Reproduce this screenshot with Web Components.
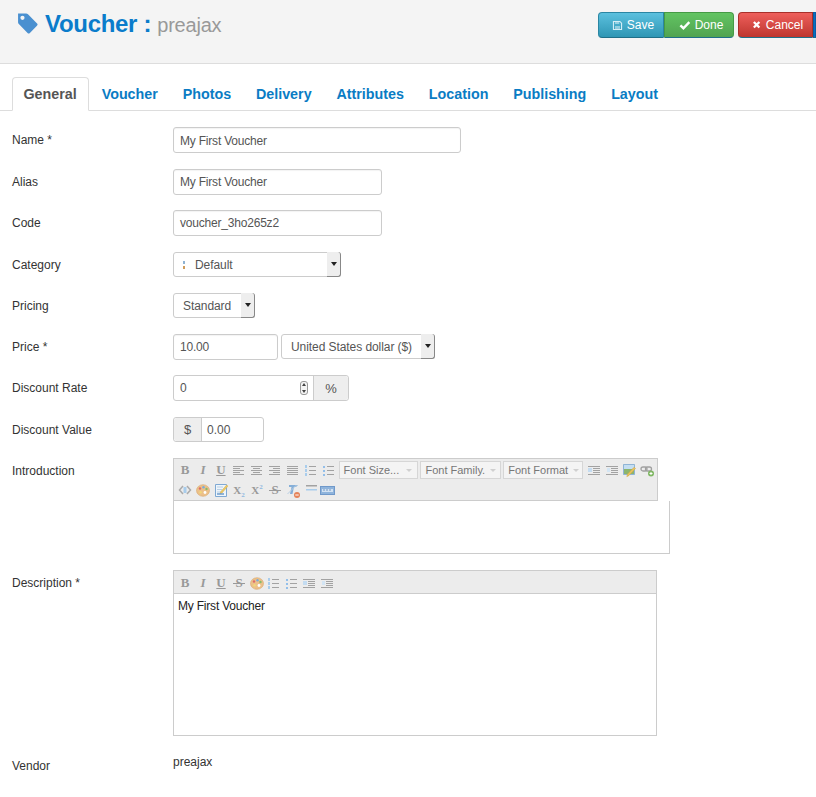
<!DOCTYPE html>
<html>
<head>
<meta charset="utf-8">
<title>Voucher</title>
<style>
  html, body { margin: 0; padding: 0; background: #fff; }
  body { font: 12px "Liberation Sans", Arial, sans-serif; color: #333; overflow: hidden; height: 797px; }
</style>
</head>
<body>
<page-header>
  <tool-button slot="actions" kind="save" icon="save">Save</tool-button>
  <tool-button slot="actions" kind="done" icon="check">Done</tool-button>
  <tool-button slot="actions" kind="cancel" icon="times">Cancel</tool-button>
  <tool-button slot="actions" kind="more"></tool-button>
</page-header>
<tab-bar>
  <tab-item active>General</tab-item>
  <tab-item>Voucher</tab-item>
  <tab-item>Photos</tab-item>
  <tab-item>Delivery</tab-item>
  <tab-item>Attributes</tab-item>
  <tab-item>Location</tab-item>
  <tab-item>Publishing</tab-item>
  <tab-item>Layout</tab-item>
</tab-bar>
<form-body>
  <form-row label="Name *" height="42"><text-box width="288" style="line-height:26px">My First Voucher</text-box></form-row>
  <form-row label="Alias" height="41"><text-box width="209">My First Voucher</text-box></form-row>
  <form-row label="Code" height="42"><text-box width="209">voucher_3ho265z2</text-box></form-row>
  <form-row label="Category" height="41"><select-box width="168" tree>Default</select-box></form-row>
  <form-row label="Pricing" height="41"><select-box width="82">Standard</select-box></form-row>
  <form-row label="Price *" height="41">
    <text-box width="105">10.00</text-box>
    <select-box width="154" style="margin-left:3px">United States dollar ($)</select-box>
  </form-row>
  <form-row label="Discount Rate" height="42"><number-addon></number-addon></form-row>
  <form-row label="Discount Value" height="41"><money-addon></money-addon></form-row>
  <form-row label="Introduction" height="112">
    <rich-editor width="485" area="497" area-height="53">
      <tool-strip>
        <tb-btn text="B"></tb-btn><tb-btn text="I"></tb-btn><tb-btn text="U"></tb-btn>
        <tb-icon name="left"></tb-icon><tb-icon name="center"></tb-icon><tb-icon name="right"></tb-icon><tb-icon name="justify"></tb-icon>
        <tb-icon name="ol"></tb-icon><tb-icon name="ul"></tb-icon>
        <tb-combo width="80" style="margin-left:1px">Font Size...</tb-combo>
        <tb-combo width="81" style="margin-left:2px">Font Family.</tb-combo>
        <tb-combo width="80" style="margin-left:2px">Font Format</tb-combo>
        <tb-icon name="outdent" style="margin-left:2px"></tb-icon><tb-icon name="indent"></tb-icon><tb-icon name="image"></tb-icon><tb-icon name="link"></tb-icon>
      </tool-strip>
      <tool-strip>
        <tb-icon name="code"></tb-icon><tb-icon name="palette"></tb-icon><tb-icon name="doc"></tb-icon>
        <tb-btn text="X" sub="2"></tb-btn><tb-btn text="X" sup="2"></tb-btn><tb-btn text="S" strike></tb-btn>
        <tb-icon name="clear"></tb-icon><tb-icon name="hr"></tb-icon><tb-icon name="charmap" style="margin-left:-2px"></tb-icon>
      </tool-strip>
    </rich-editor>
  </form-row>
  <form-row label="Description *" height="180">
    <rich-editor width="484" area="484" area-height="142" bar-pad="2" content="My First Voucher">
      <tool-strip>
        <tb-btn text="B"></tb-btn><tb-btn text="I"></tb-btn><tb-btn text="U"></tb-btn><tb-btn text="S" strike></tb-btn>
        <tb-icon name="palette" style="margin-right:-2px"></tb-icon><tb-icon name="ol"></tb-icon><tb-icon name="ul"></tb-icon>
        <tb-icon name="outdent"></tb-icon><tb-icon name="indent"></tb-icon>
      </tool-strip>
    </rich-editor>
  </form-row>
  <form-row label="Vendor" plain height="40"><span>preajax</span></form-row>
</form-body>

<script>
const ICONS = {
  save: { size: 11, d: '<path fill="none" stroke="currentColor" stroke-width="1.300" d="M1.700 1.700h7.600l2 2v7.600H1.700z"/><path fill="currentColor" d="M3.500 1.700h5v3h-5zM3.500 7h6v4.300h-6z" opacity=".55"/>' },
  check: { size: 12, d: '<path fill="none" stroke="currentColor" stroke-width="2.600" d="M1.500 6.800l3.300 3.200 6.400-6.600"/>' },
  times: { size: 10, d: '<path fill="none" stroke="currentColor" stroke-width="3" d="M2.400 2.600l7.200 7.200M9.600 2.600l-7.200 7.200"/>' }
};

const lines = (rows) => rows.map(([x, y, w]) => `<rect x="${x}" y="${y}" width="${w}" height="1" fill="#a2a2a2"/>`).join('');

const EDITOR_ICONS = {
  left: lines([[2, 3, 11], [2, 5, 7], [2, 7, 11], [2, 9, 7], [2, 11, 11]]),
  center: lines([[2, 3, 11], [4, 5, 7], [2, 7, 11], [4, 9, 7], [2, 11, 11]]),
  right: lines([[2, 3, 11], [6, 5, 7], [2, 7, 11], [6, 9, 7], [2, 11, 11]]),
  justify: lines([[2, 3, 11], [2, 5, 11], [2, 7, 11], [2, 9, 11], [2, 11, 11]]),
  ol: '<path d="M2 2h2v3H2zM2 6h2v3H2zM2 10h2v3H2z" fill="#a9cdec"/>' + lines([[6, 3, 7], [6, 7, 7], [6, 11, 7]]),
  ul: '<path d="M2 3h2v2H2zM2 7h2v2H2zM2 11h2v2H2z" fill="#93bfea"/>' + lines([[6, 3, 7], [6, 7, 7], [6, 11, 7]]),
  outdent: lines([[1, 3, 12], [6, 5, 7], [6, 7, 7], [6, 9, 7], [1, 11, 12]]) + '<path d="M1 5h4v4H1z" fill="#c4dcf1"/>',
  indent: lines([[1, 3, 12], [6, 5, 7], [6, 7, 7], [6, 9, 7], [1, 11, 12]]) + '<path d="M2 5h3v4H2z" fill="#d3e5f4"/>',
  image: '<path d="M1.500 1.500h11v10h-11z" fill="#8cb56d" stroke="#8fb4d6"/><path d="M2 2h10v4H2z" fill="#c4def2"/><path d="M13.500 5.500l-6.500 7-2.200 1.200.6-2.400 6.600-7z" fill="#e8c25f" stroke="#cfa640" stroke-width=".5"/>',
  link: '<rect x="1" y="4" width="6" height="4" rx="2" fill="none" stroke="#a0a0a0" stroke-width="1.300"/><rect x="5.500" y="4" width="6" height="4" rx="2" fill="none" stroke="#a0a0a0" stroke-width="1.300"/><circle cx="11" cy="10.500" r="3" fill="#7fb763"/><path d="M9.500 10.500h3M11 9v3" stroke="#fff"/>',
  code: '<path d="M5 3l-3.500 4L5 11M9 3l3.500 4L9 11" fill="none" stroke="#aaa" stroke-width="1.500"/><path d="M5.500 4h3v6h-3z" fill="#a9cdec"/>',
  palette: '<ellipse cx="7" cy="7.500" rx="6.500" ry="5.800" fill="#ecc08a" stroke="#d8a86c" stroke-width=".6"/><circle cx="4" cy="5.500" r="1.200" fill="#dd6c66"/><circle cx="7.500" cy="4.200" r="1.200" fill="#77acdc"/><circle cx="10.500" cy="6" r="1.200" fill="#84bb6b"/><circle cx="4.500" cy="9.200" r="1.200" fill="#f0d878"/><circle cx="9" cy="9.500" r="1.400" fill="#fff"/>',
  doc: '<path d="M1.500 1.500h11v12h-11z" fill="#eef5fb" stroke="#7fa9d3"/><path d="M3 4h6M3 6.500h5M3 9h4" stroke="#b8cfe4"/><path d="M14 3l-6 7-2 1 .6-2.200 6-6.800z" fill="#ebc865" stroke="#cfa640" stroke-width=".4"/><path d="M3 11h7" stroke="#6597ca" stroke-width="1.400"/>',
  clear: '<path d="M3 2h9L10 4H8L6.500 11H4L5.500 4H3z" fill="#86afd8"/><path d="M1.500 11l9-9" stroke="#b8cfe4"/><circle cx="11" cy="12" r="3" fill="#e58258"/><path d="M9.300 12h3.400" stroke="#fff"/>',
  hr: '<path d="M2 2h11v1.500H2z" fill="#a2a2a2"/><path d="M2 6h11v1.500H2z" fill="#a9cdec"/>',
  charmap: '<rect x="0.500" y="3.500" width="14" height="8" fill="#8fb4dc" stroke="#7099ca"/><path d="M2 6h11v3H2z" fill="#d2e2f3"/><path d="M3 7h2M6 7h2M9 7h2" stroke="#7096c2"/>'
};

// little helper so every element below stays short
function shadow(el, html) {
  el.attachShadow({ mode: 'open' }).innerHTML = html;
}

class PageHeader extends HTMLElement {
  constructor() {
    super();
    shadow(this, `
      <style>
        :host { display: flex; justify-content: space-between; box-sizing: border-box; height: 64px;
          background: #f4f4f4; border-bottom: 1px solid #ddd; padding: 12px 0 0 18px; }
        .title { display: flex; align-items: baseline; white-space: nowrap; line-height: 24px; }
        svg { align-self: flex-start; margin: 1px 7px 0 0; }
        b { font-size: 24px; letter-spacing: -.3px; color: #0a7ccb; }
        span { font-size: 20px; color: #999; margin-left: 6px; letter-spacing: -.2px; }
        .actions { display: flex; }
      </style>
      <div class="title">
        <svg width="20" height="21" viewBox="1 1 18 19"><path fill="#4a90d0" d="M1 1.500h7.300q1 0 1.700.7l8.200 8.300q1 1-.1 2.100l-6.400 6.400q-1.100 1.100-2.100.1L1.700 11q-.7-.7-.7-1.700zM5 7.300a1.900 1.900 0 1 0 0-3.800 1.900 1.900 0 0 0 0 3.800z"/></svg>
        <b>Voucher :</b><span>preajax</span>
      </div>
      <div class="actions"><slot name="actions"></slot></div>`);
  }
}

class ToolButton extends HTMLElement {
  constructor() {
    super();
    const skins = {
      save: { w: 66, bg: 'linear-gradient(#5bc0de,#2f96b4)', bd: '#2a86a3', r: '4px 0 0 4px', m: 0, ic: '#d5eef6' },
      done: { w: 70, bg: 'linear-gradient(#62c462,#51a351)', bd: '#459a45', r: '0 4px 4px 0', m: 0, ic: '#fff' },
      cancel: { w: 75, bg: 'linear-gradient(#ee5f5b,#bd362f)', bd: '#a9302a', r: '4px 0 0 4px', m: 4, ic: '#fff' },
      more: { w: 3, bg: '#0a6fc0', bd: '#0a5fa8', r: '0', m: 0, ic: '#fff' }
    };
    const s = skins[this.getAttribute('kind')];
    const icon = ICONS[this.getAttribute('icon')];
    shadow(this, `
      <style>
        :host { display: flex; align-items: center; justify-content: center; gap: 4px; box-sizing: border-box;
          width: ${s.w}px; height: 26px; margin-left: ${s.m}px; padding-left: ${icon ? 4 : 0}px; background: ${s.bg}; border: 1px solid ${s.bd};
          border-bottom-color: #1f6f88; border-radius: ${s.r}; color: #fff; font-size: 12px; }
        svg { color: ${s.ic}; }
      </style>
      ${icon ? `<svg width="${icon.size}" height="${icon.size}" viewBox="0 0 13 13">${icon.d}</svg>` : ''}<slot></slot>`);
  }
}

class TabBar extends HTMLElement {
  constructor() {
    super();
    shadow(this, `
      <style>
        :host { display: flex; box-sizing: border-box; height: 47px; padding: 13px 0 0 12px;
          border-bottom: 1px solid #ddd; }
      </style>
      <slot></slot>`);
  }
}

class TabItem extends HTMLElement {
  constructor() {
    super();
    const on = this.hasAttribute('active');
    shadow(this, `
      <style>
        :host { display: block; box-sizing: border-box; height: 34px; padding: ${on ? '0 11px 0 10.500px' : '0 11.430px'}; line-height: 32px;
          margin-right: ${on ? 0.500 : 0}px; font-size: 14.300px; font-weight: bold; white-space: nowrap;
          color: ${on ? '#555' : '#0a7cc4'}; background: ${on ? '#fff' : 'transparent'}; border: 1px solid ${on ? '#ddd' : 'transparent'};
          border-bottom-color: ${on ? '#fff' : 'transparent'}; border-radius: 4px 4px 0 0; }
      </style>
      <slot></slot>`);
  }
}

class FormBody extends HTMLElement {
  constructor() {
    super();
    shadow(this, `
      <style>:host { display: block; padding: 16px 0 0 12px; }</style>
      <slot></slot>`);
  }
}

class FormRow extends HTMLElement {
  constructor() {
    super();
    const h = this.getAttribute('height');
    const plain = this.hasAttribute('plain');
    shadow(this, `
      <style>
        :host { display: flex; height: ${h}px; align-items: flex-start; }
        label { width: 161px; flex: none; line-height: 26px; margin-top: ${plain ? 3 : 0}px; color: #333; }
        .f { display: flex; align-items: flex-start; line-height: 26px; margin-top: ${plain ? -1 : 0}px; }
      </style>
      <label>${this.getAttribute('label')}</label>
      <div class="f"><slot></slot></div>`);
  }
}

class TextBox extends HTMLElement {
  constructor() {
    super();
    shadow(this, `
      <style>
        :host { display: block; box-sizing: border-box; width: ${this.getAttribute('width')}px; height: 25.500px;
          padding: 0 6px; border: 1px solid #ccc; border-radius: 3px; background: #fff; color: #555; letter-spacing: -.2px;
          line-height: 24px; white-space: nowrap; box-shadow: inset 0 1px 1px rgba(0,0,0,.05); }
      </style>
      <slot></slot>`);
  }
}

class SelectBox extends HTMLElement {
  constructor() {
    super();
    const tree = this.hasAttribute('tree');
    shadow(this, `
      <style>
        :host { display: flex; box-sizing: border-box; width: ${this.getAttribute('width')}px; height: 25px;
          border: 1px solid #ccc; border-radius: 3px; background: #fff; color: #555; line-height: 24px; letter-spacing: -.07px; }
        .t { flex: 1; padding-left: 9px; white-space: nowrap; overflow: hidden; }
        .tree { display: inline-block; width: 1.500px; height: 9px; margin: 0 10.500px 0 0; vertical-align: -1px;
          background: linear-gradient(#8fb3d4 0 3px, transparent 3px 5px, #cf9c5c 5px 8px, transparent 8px); }
        .a { width: 13px; margin: -1px -1px -1px 0; background: #eee; border-right: 1px solid #888; border-bottom: 1px solid #888;
          border-radius: 0 3px 3px 0; display: flex; align-items: center; justify-content: center; }
        .a::before { content: ""; border: 3px solid transparent; border-top: 4px solid #222; border-bottom: 0; }
      </style>
      <div class="t">${tree ? '<span class="tree"></span>' : ''}<slot></slot></div><div class="a"></div>`);
  }
}

class NumberAddon extends HTMLElement {
  constructor() {
    super();
    shadow(this, `
      <style>
        :host { display: flex; box-sizing: border-box; width: 176px; height: 26px; border: 1px solid #ccc;
          border-radius: 3px; line-height: 25px; color: #555; background: #fff; }
        .v { flex: 1; padding-left: 6px; position: relative; }
        .spin { position: absolute; right: 5px; top: 5px; width: 6px; height: 12px; border: 1px solid #999; border-radius: 3px; background: #f4f4f4; }
        .spin::before, .spin::after { content: ""; position: absolute; left: 1px; border: 2px solid transparent; }
        .spin::before { top: 1px; border-bottom: 3px solid #444; border-top: 0; }
        .spin::after { bottom: 1px; border-top: 3px solid #444; border-bottom: 0; }
        .u { width: 34px; text-align: center; background: #eee; border-left: 1px solid #ccc; border-radius: 0 3px 3px 0; font-size: 13px; }
      </style>
      <div class="v">0<span class="spin"></span></div><div class="u">%</div>`);
  }
}

class MoneyAddon extends HTMLElement {
  constructor() {
    super();
    shadow(this, `
      <style>
        :host { display: flex; box-sizing: border-box; width: 91px; height: 25px; border: 1px solid #ccc;
          border-radius: 3px; line-height: 24px; color: #555; background: #fff; }
        .u { width: 27px; text-align: center; background: #eee; border-right: 1px solid #ccc; border-radius: 3px 0 0 3px; font-size: 13px; }
        .v { flex: 1; padding-left: 5px; }
      </style>
      <div class="u">$</div><div class="v">0.00</div>`);
  }
}

class RichEditor extends HTMLElement {
  constructor() {
    super();
    const w = this.getAttribute('width');
    const content = this.getAttribute('content') || '';
    shadow(this, `
      <style>
        :host { display: block; width: ${w}px; }
        .bar { box-sizing: border-box; width: ${w}px; background: #ececec; border: 1px solid #ccc; padding: ${this.getAttribute('bar-pad') || 1}px 0 0 2px; }
        .area { box-sizing: border-box; width: ${this.getAttribute('area')}px; height: ${this.getAttribute('area-height')}px;
          border: 1px solid #ccc; border-top: 0; background: #fff; padding: 5px 4px; line-height: 14px; letter-spacing: -.2px; color: #222; white-space: nowrap; }
      </style>
      <div class="bar"><slot></slot></div>
      <div class="area">${content}</div>`);
  }
}

class ToolStrip extends HTMLElement {
  constructor() {
    super();
    shadow(this, `
      <style>:host { display: flex; align-items: center; height: 20px; }</style>
      <slot></slot>`);
  }
}

class TbBtn extends HTMLElement {
  constructor() {
    super();
    const t = this.getAttribute('text');
    const italic = t === 'I';
    const under = t === 'U';
    const strike = this.hasAttribute('strike');
    const sub = this.getAttribute('sub');
    const sup = this.getAttribute('sup');
    shadow(this, `
      <style>
        :host { display: block; position: relative; width: 18px; height: 20px; text-align: center;
          font: ${italic ? 'italic ' : ''}bold ${t === 'X' ? 11 : 13}px/20px "Liberation Serif", serif; color: #999; white-space: nowrap; }
        span { text-decoration: ${under ? 'underline' : 'none'}; }
        i { position: absolute; left: 3px; right: 3px; top: 10px; height: 1px; background: #999; }
        sub, sup { font-size: 7px; line-height: 0; color: #8fb8e0; }
      </style>
      <span>${t}</span>${sub ? `<sub>${sub}</sub>` : ''}${sup ? `<sup>${sup}</sup>` : ''}${strike ? '<i></i>' : ''}`);
  }
}

class TbIcon extends HTMLElement {
  constructor() {
    super();
    shadow(this, `
      <style>:host { display: flex; width: 18px; height: 20px; align-items: center; justify-content: center; }</style>
      <svg width="15" height="15" viewBox="0 0 15 15">${EDITOR_ICONS[this.getAttribute('name')]}</svg>`);
  }
}

class TbCombo extends HTMLElement {
  constructor() {
    super();
    shadow(this, `
      <style>
        :host { display: flex; box-sizing: border-box; width: ${this.getAttribute('width')}px; height: 18px; align-items: center;
          background: #f4f4f4; border: 1px solid #d6d6d6; color: #777; font-size: 11px; padding-left: 4px; white-space: nowrap; overflow: hidden; }
        div { flex: 1; }
        i { width: 0; height: 0; border: 3px solid transparent; border-top: 3px solid #d0d0d0; border-bottom: 0; margin: 0 5px; }
      </style>
      <div><slot></slot></div><i></i>`);
  }
}

customElements.define('page-header', PageHeader);
customElements.define('tool-button', ToolButton);
customElements.define('tab-bar', TabBar);
customElements.define('tab-item', TabItem);
customElements.define('form-body', FormBody);
customElements.define('form-row', FormRow);
customElements.define('text-box', TextBox);
customElements.define('select-box', SelectBox);
customElements.define('number-addon', NumberAddon);
customElements.define('money-addon', MoneyAddon);
customElements.define('rich-editor', RichEditor);
customElements.define('tool-strip', ToolStrip);
customElements.define('tb-btn', TbBtn);
customElements.define('tb-icon', TbIcon);
customElements.define('tb-combo', TbCombo);
</script>
</body>
</html>
